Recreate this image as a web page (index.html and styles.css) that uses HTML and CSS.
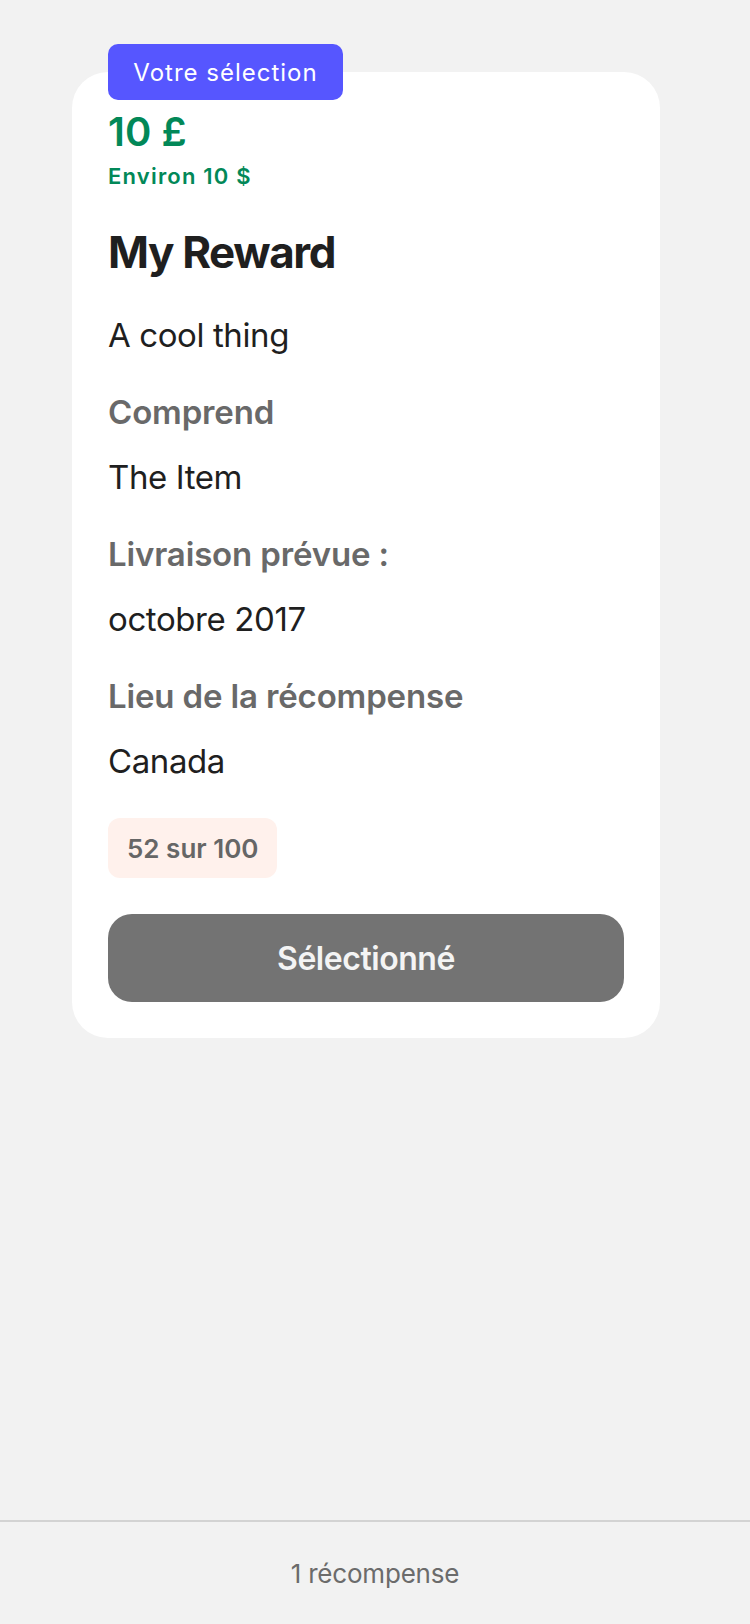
FILE: index.html
```html
<!DOCTYPE html>
<html lang="fr">
<head>
<meta charset="utf-8">
<title>Récompense</title>
<link rel="stylesheet" href="styles.css">
</head>
<body>
<div class="page">
  <main class="main">
    <article class="card">
      <div class="badge">Votre sélection</div>
      <div class="price-block">
        <div class="price">10 £</div>
        <div class="converted">Environ 10 $</div>
      </div>
      <h1 class="title">My Reward</h1>
      <p class="text">A cool thing</p>
      <section class="section">
        <h2 class="label">Comprend</h2>
        <p class="text">The Item</p>
      </section>
      <section class="section">
        <h2 class="label">Livraison prévue :</h2>
        <p class="text">octobre 2017</p>
      </section>
      <section class="section">
        <h2 class="label">Lieu de la récompense</h2>
        <p class="text">Canada</p>
      </section>
      <div class="pill-row"><span class="pill">52 sur 100</span></div>
      <button class="btn" type="button">Sélectionné</button>
    </article>
  </main>
  <footer class="footer">1 récompense</footer>
</div>
</body>
</html>
```
FILE: styles.css
```css
* { box-sizing: border-box; }
html, body { margin: 0; padding: 0; }
body {
  background: #f2f2f2;
  font-family: Inter, "Noto Sans", "Liberation Sans", sans-serif;
  color: #1f1f1f;
}
.page {
  min-height: 1624px;
  display: flex;
  flex-direction: column;
}
.main {
  flex: 1;
  padding: 72px 0 0 72px;
}
.card {
  position: relative;
  width: 588px;
  background: #ffffff;
  border-radius: 36px;
  padding: 36px;
  display: flex;
  flex-direction: column;
  gap: 36px;
}
.badge {
  position: absolute;
  top: -28px;
  left: 36px;
  width: 235px;
  height: 56px;
  display: flex;
  align-items: center;
  justify-content: center;
  background: #5656ff;
  color: #ffffff;
  border-radius: 10px;
  font-size: 24px;
  letter-spacing: 1px;
}
.price-block {
  display: flex;
  flex-direction: column;
  gap: 8px;
}
.price {
  font-size: 40px;
  line-height: 48px;
  font-weight: 600;
  color: #028858;
}
.converted {
  font-size: 22px;
  line-height: 25px;
  font-weight: 600;
  color: #028858;
  letter-spacing: 1.2px;
}
.title {
  margin: 0;
  font-size: 44px;
  line-height: 54px;
  font-weight: 700;
  color: #1f1f1f;
  letter-spacing: -1.4px;
}
.text {
  margin: 0;
  font-size: 33px;
  line-height: 41px;
  font-weight: 400;
  color: #1f1f1f;
  letter-spacing: -0.4px;
}
.section {
  display: flex;
  flex-direction: column;
  gap: 24px;
}
.label {
  margin: 0;
  font-size: 33px;
  line-height: 41px;
  font-weight: 600;
  color: #696969;
  letter-spacing: -0.15px;
}
.pill-row { display: flex; }
.pill {
  height: 60px;
  padding: 0 19px;
  display: flex;
  align-items: center;
  background: #fff1ec;
  border-radius: 12px;
  font-size: 26px;
  font-weight: 600;
  color: #666666;
  letter-spacing: 0;
}
.btn {
  height: 88px;
  width: 100%;
  border: 0;
  border-radius: 24px;
  background: #737373;
  color: #f4f4f4;
  font-family: inherit;
  font-size: 32px;
  font-weight: 600;
  letter-spacing: -0.45px;
  padding: 0;
}
.footer {
  height: 104px;
  border-top: 2px solid #d3d3d3;
  display: flex;
  align-items: center;
  justify-content: center;
  font-size: 26px;
  color: #6b6b6b;
  letter-spacing: -0.2px;
}
```
